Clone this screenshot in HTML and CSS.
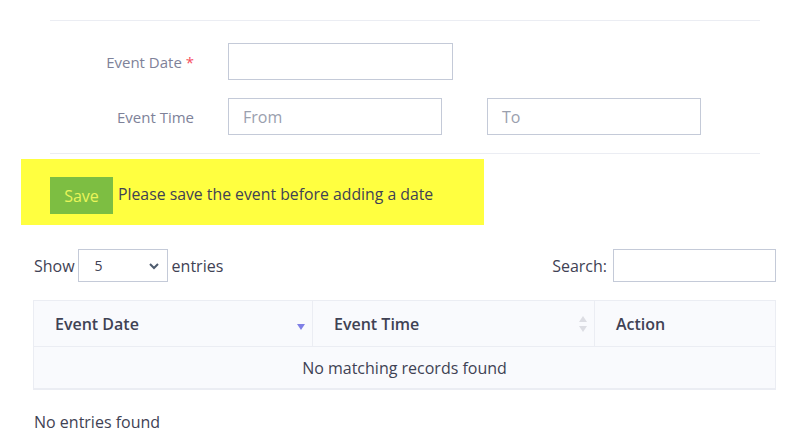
FILE: index.html
```html
<!DOCTYPE html>
<html>
<head>
<meta charset="utf-8">
<link rel="stylesheet" href="styles.css">
</head>
<body>
<div class="page">
  <div class="form-block">
    <div class="row">
      <label class="lbl">Event Date <span class="req">*</span></label>
      <div class="input wide"></div>
    </div>
    <div class="row">
      <label class="lbl">Event Time</label>
      <div class="input half"><span class="ph">From</span></div>
      <div class="input half"><span class="ph">To</span></div>
    </div>
  </div>
  <div class="notice">
    <button class="save">Save</button>
    <span class="notice-text">Please save the event before adding a date</span>
  </div>
  <div class="dt-top">
    <div class="len">Show
      <div class="select"><span>5</span>
        <svg width="12" height="8" viewBox="0 0 12 8"><path d="M2 2 L6 6 L10 2" fill="none" stroke="#4e5b6e" stroke-width="2"/></svg>
      </div>
      entries</div>
    <div class="search">Search: <div class="sinput"></div></div>
  </div>
  <div class="table">
    <div class="thead">
      <div class="th c1">Event Date
        <svg class="sort" width="10" height="8" viewBox="0 0 10 8"><path d="M1 1 L9 1 L5 7 Z" fill="#7f7fe6"/></svg>
      </div>
      <div class="th c2">Event Time
        <svg class="sort" width="10" height="18" viewBox="0 0 10 18"><path d="M1 7 L9 7 L5 1 Z" fill="#dcdde3"/><path d="M1 11 L9 11 L5 17 Z" fill="#dcdde3"/></svg>
      </div>
      <div class="th c3">Action</div>
    </div>
    <div class="tbody">No matching records found</div>
  </div>
  <div class="info">No entries found</div>
</div>
</body>
</html>
```
FILE: styles.css
```css
* { box-sizing: border-box; }
body { margin: 0; background: #fff; font-family: "Open Sans", "Noto Sans", sans-serif; color: #3f4254; }
.page { width: 806px; height: 445px; overflow: hidden; padding-top: 20px; }
.form-block { margin: 0 46px 0 50px; border-top: 1px solid #ebedf3; border-bottom: 1px solid #ebedf3; padding: 22px 0 18px; display: flex; flex-direction: column; gap: 18px; }
.row { display: flex; align-items: center; height: 37px; }
.lbl { width: 178px; text-align: right; padding-right: 34px; font-size: 15px; color: #7e8299; white-space: nowrap; }
.req { color: #f64e60; }
.input { height: 37px; border: 1px solid #c4cad8; background: #fff; display: flex; align-items: center; padding-left: 14px; }
.wide { width: 225px; }
.half { width: 214px; margin-right: 45px; }
.ph { font-size: 16px; color: #9aa0ae; }
.notice { margin: 5px 0 0 21px; width: 463px; height: 66px; background: #ffff40; display: flex; align-items: flex-start; padding: 18px 0 0 29px; }
.save { width: 63px; height: 37px; border: none; background: #7dbe42; color: #e9f55a; font-family: inherit; font-size: 16px; padding: 0; margin-right: 5px; }
.notice-text { font-size: 15.8px; line-height: 35px; color: #3f4254; }
.dt-top { display: flex; justify-content: space-between; align-items: center; margin: 24px 30px 0 34px; height: 33px; font-size: 16px; }
.len { display: flex; align-items: center; gap: 0; }
.select { width: 90px; height: 33px; border: 1px solid #c4cad8; margin: 0 4px 0 3px; display: flex; align-items: center; justify-content: space-between; padding: 0 7px 0 16px; font-size: 14px; }
.search { display: flex; align-items: center; }
.sinput { width: 163px; height: 33px; border: 1px solid #c4cad8; margin-left: 6px; }
.table { margin: 18px 30px 0 33px; border: 1px solid #ebedf3; border-bottom-width: 2px; background: #f9fafd; }
.thead { display: flex; height: 46px; border-bottom: 1px solid #ebedf3; }
.th { position: relative; display: flex; align-items: center; padding-left: 21px; font-size: 16px; font-weight: 600; color: #3f4254; }
.c1 { width: 279px; border-right: 1px solid #ebedf3; }
.c2 { width: 282px; border-right: 1px solid #ebedf3; }
.c3 { flex: 1; }
.sort { position: absolute; right: 6px; }
.c1 .sort { top: 22px; }
.c2 .sort { top: 14px; }
.tbody { height: 41px; display: flex; align-items: center; justify-content: center; font-size: 16px; }
.info { margin: 21px 0 0 34px; font-size: 16px; }
```
